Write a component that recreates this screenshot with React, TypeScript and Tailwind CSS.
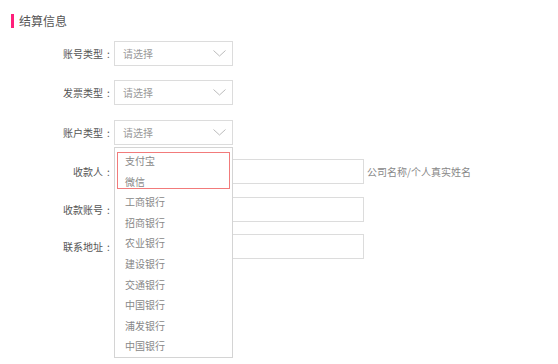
import { useState } from 'react';

const banks = ['工商银行', '招商银行', '农业银行', '建设银行', '交通银行', '中国银行', '浦发银行', '中国银行'];

export default function App() {
  const [open] = useState(true);

  return (
    <div className="relative w-[558px] h-[364px] overflow-hidden bg-white font-['Noto_Sans_CJK_SC','Noto_Sans',sans-serif]">
      {/* ================= Title ================= */}
      <div className="flex items-center pt-[14px] pl-[11px]">
        <div className="w-[3px] h-[14px] bg-[#ff1f7a]" />
        <span className="ml-[5px] text-[12px] leading-[14px] text-[#555]">结算信息</span>
      </div>

      {/* ================= Form ================= */}
      <div className="flex flex-col">
        <SelectRow className="mt-[13px]" label="账号类型" />
        <SelectRow className="mt-[14px]" label="发票类型" />
        <div className="relative mt-[15px]">
          <SelectRow label="账户类型" />
          {open && <Dropdown />}
        </div>
        <InputRow className="mt-[14px]" label="收款人" hint="公司名称/个人真实姓名" />
        <InputRow className="mt-[13px]" label="收款账号" />
        <InputRow className="mt-[12px]" label="联系地址" />
      </div>
    </div>
  );
}

/* ================= Reusable Components ================= */

function Label({ text }: { text: string }) {
  return (
    <div className="flex w-[114px] shrink-0 text-[10px] text-[#555]">
      <span className="flex-1 text-right">{text}</span>
      <span className="w-[11px] text-center">:</span>
    </div>
  );
}

function SelectRow({ label, className = '' }: { label: string; className?: string }) {
  return (
    <div className={`flex items-center h-[25px] ${className}`}>
      <Label text={label} />
      <div className="flex items-center justify-between w-[119px] h-[25px] border border-[#dcdcdc] pl-[8px] pr-[6px]">
        <span className="text-[10px] text-[#999]">请选择</span>
        <svg width="13" height="7" viewBox="0 0 13 7" fill="none">
          <path d="M0.5 0.5L6.5 6L12.5 0.5" stroke="#bbb" strokeWidth="1" />
        </svg>
      </div>
    </div>
  );
}

function InputRow({ label, hint, className = '' }: { label: string; hint?: string; className?: string }) {
  return (
    <div className={`flex items-center h-[25px] ${className}`}>
      <Label text={label} />
      <div className="w-[250px] h-[25px] border border-[#dcdcdc]" />
      {hint && <span className="ml-[3px] text-[10px] text-[#888]">{hint}</span>}
    </div>
  );
}

function Dropdown() {
  return (
    <div className="absolute z-10 left-[114px] top-[27px] w-[119px] h-[211px] bg-white border border-[#d4d4d4] pt-[3px]">
      <div className="absolute left-[2px] top-[4px] w-[113px] h-[37px] border border-[#f27b7b]" />
      {['支付宝', '微信', ...banks].map((name, i) => (
        <div key={i} className="h-[20.6px] leading-[20.6px] pl-[10px] text-[10px] text-[#888]">
          {name}
        </div>
      ))}
    </div>
  );
}
